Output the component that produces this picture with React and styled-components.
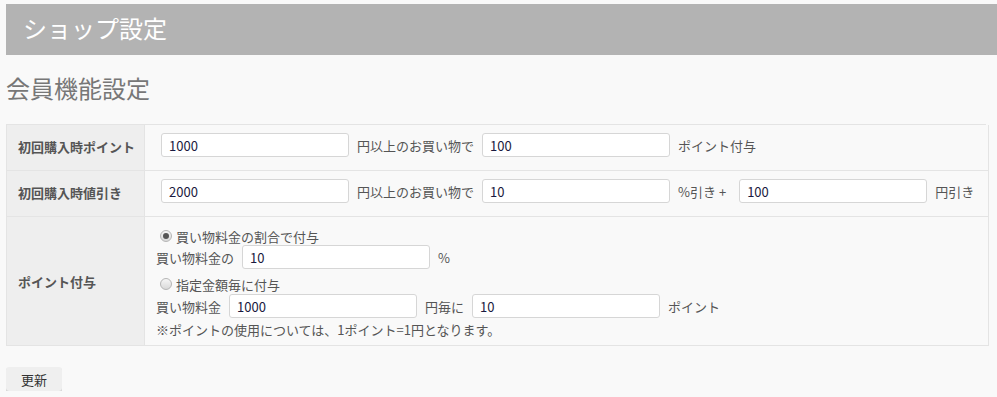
import React from "react";
import styled, { createGlobalStyle } from "styled-components";

const Global = createGlobalStyle`
  html, body { margin: 0; padding: 0; background: #f9f9f9; overflow: hidden; }
  body { font-family: "Noto Sans CJK JP", "Noto Sans", sans-serif; font-size: 13px; color: #555; }
`;

const Page = styled.div`
  padding: 4px 11px 0 6px;
`;

const Header = styled.header`
  height: 51px;
  margin-right: -11px;
  background: #b3b3b3;
  display: flex;
  align-items: center;
  padding: 0 0 3px 17px;
  box-sizing: border-box;
`;

const Title = styled.h1`
  margin: 0;
  font-size: 24px;
  font-weight: normal;
  color: #fff;
  line-height: 30px;
`;

const Heading = styled.h2`
  margin: 18px 0 21px;
  font-size: 24px;
  font-weight: normal;
  color: #777;
  line-height: 30px;
`;

const Grid = styled.div`
  display: grid;
  grid-template-columns: 138px 1fr;
  border-top: 1px solid #e4e4e4;
  border-left: 1px solid #e4e4e4;
`;

const LabelCell = styled.div`
  background: #eeeeee;
  border-right: 1px solid #e4e4e4;
  border-bottom: 1px solid #e4e4e4;
  display: flex;
  align-items: center;
  padding: 0 0 0 11px;
  white-space: nowrap;
  font-weight: bold;
  color: #555;
  padding-bottom: ${(p) => (p.$shift ? "3px" : "0")};
`;

const ValueCell = styled.div`
  border-right: 1px solid #e4e4e4;
  border-bottom: 1px solid #e4e4e4;
  padding: ${(p) => (p.$tall ? "10px 11px 7px" : "8px 11px 13px")};
  display: flex;
  flex-direction: column;
`;

const Line = styled.div`
  display: flex;
  align-items: center;
  height: 24px;
  margin-top: ${(p) => p.$mt || 0}px;
`;

const TextLine = styled.div`
  display: flex;
  align-items: center;
  height: 18px;
  margin-top: ${(p) => p.$mt || 0}px;
`;

const Input = styled.input`
  box-sizing: border-box;
  width: 188px;
  height: 24px;
  margin: 0 5px;
  padding: 0 7px;
  border: 1px solid #d6d6d6;
  border-radius: 3px;
  background: #fff;
  font-family: "Noto Sans CJK JP", "Noto Sans", sans-serif;
  font-size: 13px;
  color: #1a1a40;
  outline: none;
`;

const Unit = styled.span`
  margin: 0 ${(p) => p.$mr ?? 3}px 0 ${(p) => p.$ml ?? 3}px;
  white-space: nowrap;
`;

const Radio = styled.input.attrs({ type: "radio" })`
  appearance: none;
  -webkit-appearance: none;
  width: 12px;
  height: 12px;
  margin: 0 4px 0 4px;
  border-radius: 50%;
  border: 1px solid #b5b5b5;
  box-sizing: border-box;
  background: linear-gradient(#f6f6f6, #d9d9d9);
  position: relative;
  &:checked::after {
    content: "";
    position: absolute;
    left: 2px;
    top: 2px;
    width: 6px;
    height: 6px;
    border-radius: 50%;
    background: #555;
  }
`;

const Button = styled.button`
  margin-top: 21px;
  width: 56px;
  height: 24px;
  border: none;
  border-radius: 3px;
  background: #efefef;
  box-shadow: 0 1px 0 #c9c9c9;
  font-family: "Noto Sans CJK JP", "Noto Sans", sans-serif;
  font-size: 13px;
  color: #333;
  padding: 0;
`;

export default function App() {
  return (
    <>
      <Global />
      <Page>
        <Header>
          <Title>ショップ設定</Title>
        </Header>
        <Heading>会員機能設定</Heading>
        <Grid>
          <LabelCell $shift>初回購入時ポイント</LabelCell>
          <ValueCell>
            <Line>
              <Input defaultValue="1000" />
              <Unit>円以上のお買い物で</Unit>
              <Input defaultValue="100" />
              <Unit>ポイント付与</Unit>
            </Line>
          </ValueCell>

          <LabelCell $shift>初回購入時値引き</LabelCell>
          <ValueCell>
            <Line>
              <Input defaultValue="2000" />
              <Unit>円以上のお買い物で</Unit>
              <Input defaultValue="10" />
              <Unit $mr={8}>%引き +</Unit>
              <Input defaultValue="100" />
              <Unit>円引き</Unit>
            </Line>
          </ValueCell>

          <LabelCell>ポイント付与</LabelCell>
          <ValueCell $tall>
            <TextLine>
              <Radio name="pt" defaultChecked />
              <span>買い物料金の割合で付与</span>
            </TextLine>
            <Line>
              <Unit $ml={0}>買い物料金の</Unit>
              <Input defaultValue="10" />
              <Unit>%</Unit>
            </Line>
            <TextLine $mt={6}>
              <Radio name="pt" />
              <span>指定金額毎に付与</span>
            </TextLine>
            <Line $mt={1}>
              <Unit $ml={0}>買い物料金</Unit>
              <Input defaultValue="1000" />
              <Unit>円毎に</Unit>
              <Input defaultValue="10" />
              <Unit>ポイント</Unit>
            </Line>
            <TextLine $mt={2}>
              ※ポイントの使用については、1ポイント=1円となります。
            </TextLine>
          </ValueCell>
        </Grid>
        <Button>更新</Button>
      </Page>
    </>
  );
}
